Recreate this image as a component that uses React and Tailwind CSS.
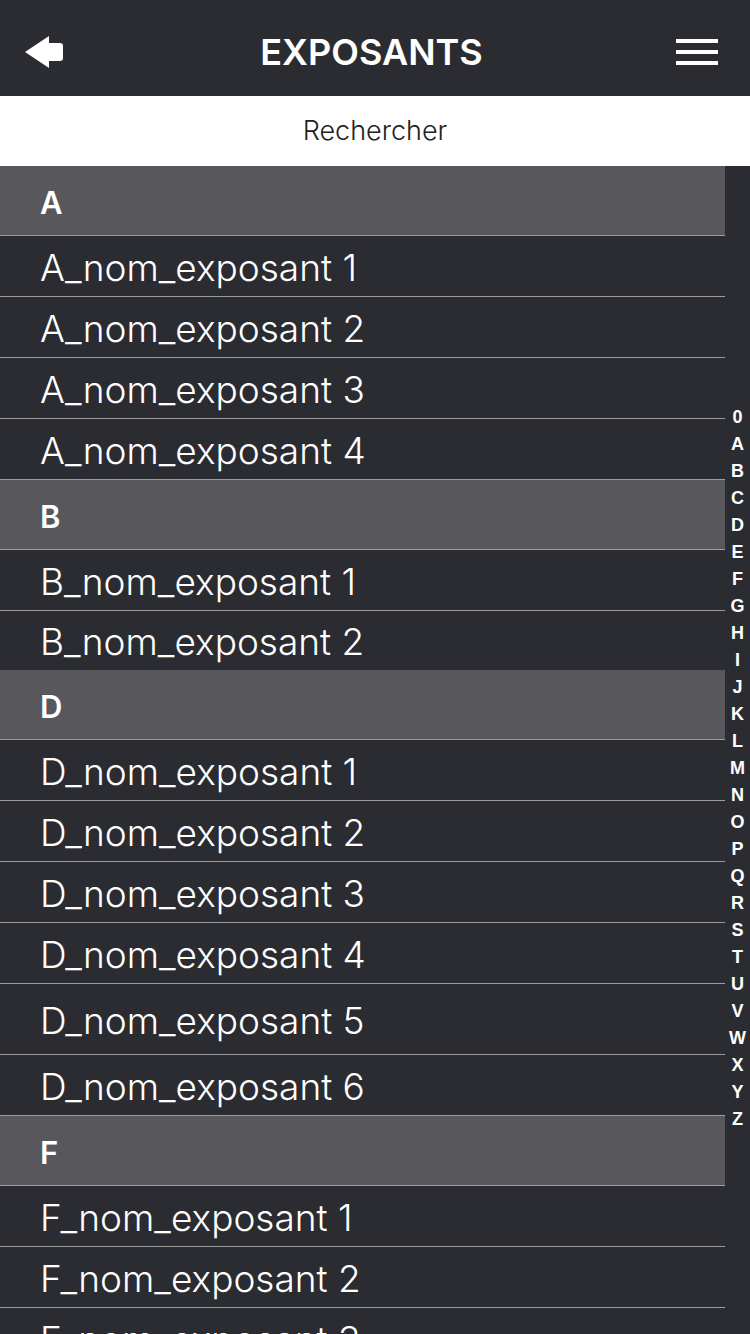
import React from 'react';

const sections = [
  { letter: 'A', items: [['A_nom_exposant 1'], ['A_nom_exposant 2'], ['A_nom_exposant 3'], ['A_nom_exposant 4']] },
  { letter: 'B', items: [['B_nom_exposant 1'], ['B_nom_exposant 2', 'h-[59px]', true]] },
  {
    letter: 'D',
    items: [
      ['D_nom_exposant 1'],
      ['D_nom_exposant 2'],
      ['D_nom_exposant 3'],
      ['D_nom_exposant 4'],
      ['D_nom_exposant 5', 'h-[71px]'],
      ['D_nom_exposant 6'],
    ],
  },
  { letter: 'F', items: [['F_nom_exposant 1'], ['F_nom_exposant 2'], ['F_nom_exposant 3']] },
];

const index = '0ABCDEFGHIJKLMNOPQRSTUVWXYZ'.split('');

const BackArrow = () => (
  <svg width="38" height="32" viewBox="0 0 38 32" fill="#fff">
    <path d="M0 16 L24 0 L24 7 L35 7 Q38 7 38 10 L38 22 Q38 25 35 25 L24 25 L24 32 Z" />
  </svg>
);

const App = () => {
  return (
    <div
      className="w-[750px] h-[1334px] overflow-hidden bg-[#2b2c31] flex flex-col"
      style={{ fontFamily: 'Inter, Roboto, "Noto Sans", sans-serif' }}
    >
      {/* Top bar */}
      <header className="h-[96px] shrink-0 flex items-center justify-between px-[25px] pt-[8px] bg-[#2b2c31]">
        <div className="w-[42px] flex items-center">
          <BackArrow />
        </div>
        <h1 className="text-white text-[36px] font-semibold">EXPOSANTS</h1>
        <div className="w-[42px] flex flex-col gap-[7px] mr-[7px]">
          <span className="block h-[4px] bg-white" />
          <span className="block h-[4px] bg-white" />
          <span className="block h-[4px] bg-white" />
        </div>
      </header>

      {/* Search */}
      <div className="h-[70px] shrink-0 bg-white flex items-center justify-center">
        <span className="text-[27px] font-light text-[#222]">Rechercher</span>
      </div>

      {/* List + index */}
      <div className="flex flex-1 min-h-0">
        <div className="w-[725px] shrink-0">
          {sections.map((s) => (
            <div key={s.letter}>
              <div className="h-[70px] bg-[#58575c] border-b border-[#9c9c9e] flex items-center pl-[40px] pt-[6px]">
                <span className="text-white text-[31px] font-semibold">{s.letter}</span>
              </div>
              {s.items.map(([name, h, noBorder]) => (
                <div
                  key={name}
                  className={`${h || 'h-[61px]'} ${noBorder ? '' : 'border-b border-[#9c9c9e]'} flex items-center pl-[40px] pt-[3px]`}
                >
                  <span className="text-white text-[37px] font-light">{name}</span>
                </div>
              ))}
            </div>
          ))}
        </div>
        <div
          className="flex-1 flex flex-col items-center pt-[238px]"
          style={{ fontFamily: '"Liberation Sans", Arial, sans-serif' }}
        >
          {index.map((l) => (
            <span key={l} className="text-white text-[18px] font-bold leading-[27px]">
              {l}
            </span>
          ))}
        </div>
      </div>
    </div>
  );
};

export default App;
